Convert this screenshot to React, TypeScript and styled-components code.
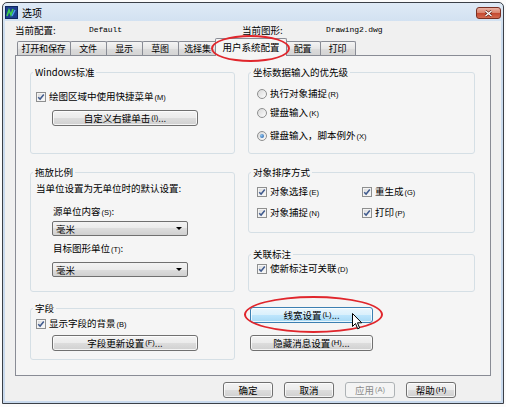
import React from 'react';
import styled, { createGlobalStyle, css } from 'styled-components';

const PANEL_BG = '#f5f5f5';

const GlobalStyle = createGlobalStyle`
  html, body {
    margin: 0;
    padding: 0;
    background: #fbfbfb;
  }
  body {
    font-family: "Noto Sans CJK SC", "Noto Sans", sans-serif;
    font-size: 9.5px;
    line-height: 12px;
    color: #000;
  }
`;

const Window = styled.div`
  position: relative;
  box-sizing: border-box;
  width: 502px;
  height: 402px;
  margin: 2px 0 0 2px;
  padding: 0 2px 2px;
  border: 1px solid #3b4048;
  border-radius: 5px 5px 0 0;
  background: linear-gradient(#dfeaf6, #cadbee 30px, #c9daee);
  box-shadow: 0 1px 0 #2ea3dc;
  display: flex;
  flex-direction: column;
`;

const TitleBar = styled.div`
  height: 18px;
  display: flex;
  align-items: center;
  gap: 4px;
  flex: none;
`;

const Caption = styled.span`
  font-size: 10px;
  margin-top: 1px;
`;

const CloseButton = styled.div`
  box-sizing: border-box;
  margin-left: auto;
  align-self: flex-start;
  margin-top: 4px;
  width: 25px;
  height: 12px;
  border: 1px solid #7a2f22;
  border-radius: 3px;
  background: linear-gradient(#eab3a5, #d9826c 50%, #c4472e 50%, #d46a50);
  display: flex;
  align-items: center;
  justify-content: center;
`;

const Client = styled.div`
  flex: 1;
  background: #f0f0f0;
  padding: 0 10px;
  display: flex;
  flex-direction: column;
`;

const InfoRow = styled.div`
  height: 17px;
  display: grid;
  grid-template-columns: 74px 153px 84px 1fr;
  align-items: center;
`;

const Mono = styled.span`
  font-family: "Liberation Mono", "DejaVu Sans Mono", monospace;
  font-size: 8px;
  letter-spacing: -0.1px;
`;

const TabStrip = styled.div`
  height: 17px;
  display: flex;
  align-items: flex-end;
  padding-left: 2px;
  position: relative;
  z-index: 1;
`;

const Tab = styled.div<{ $w: number; $active?: boolean }>`
  box-sizing: border-box;
  width: ${(p) => p.$w}px;
  height: 14px;
  margin-right: -1px;
  padding-right: 1px;
  border: 1px solid #898c95;
  border-bottom: none;
  border-radius: 2px 2px 0 0;
  background: linear-gradient(#f4f4f4, #e6e6e6 50%, #dcdcdc 50%, #d4d4d4);
  font-size: 9px;
  letter-spacing: -0.2px;
  display: flex;
  align-items: center;
  justify-content: center;
  white-space: nowrap;
  flex: none;
  ${(p) =>
    p.$active &&
    css`
      height: 18px;
      margin: 0 -2px -1px -2px;
      padding-right: 0;
      font-size: 9.5px;
      letter-spacing: 0;
      background: ${PANEL_BG};
      position: relative;
      z-index: 2;
      padding-bottom: 2px;
    `}
`;

const Panel = styled.div`
  box-sizing: border-box;
  height: 321px;
  border: 1px solid #898c95;
  background: ${PANEL_BG};
  padding: 16px 14px 0;
`;

const Columns = styled.div`
  display: grid;
  grid-template-columns: 205px 227px;
  column-gap: 13px;
  align-items: start;
`;

const Col = styled.div`
  display: flex;
  flex-direction: column;
`;

const Group = styled.div<{ $h: number; $top?: number }>`
  box-sizing: border-box;
  height: ${(p) => p.$h}px;
  margin-top: ${(p) => p.$top ?? 0}px;
  padding: 0 5px;
  border: 1px solid #d5dfe5;
  border-radius: 3px;
  display: flex;
  flex-direction: column;
  align-items: flex-start;
`;

const Legend = styled.div`
  margin: -7px 0 0 -3px;
  padding: 0 2px;
  height: 12px;
  background: ${PANEL_BG};
  white-space: nowrap;
`;

const Line = styled.div<{ $top?: number; $left?: number }>`
  height: 12px;
  margin-top: ${(p) => p.$top ?? 0}px;
  margin-left: ${(p) => p.$left ?? 0}px;
  display: flex;
  align-items: center;
  gap: 3px;
  white-space: nowrap;
`;

const Key = styled.span`
  font-family: "Liberation Sans", sans-serif;
  font-size: 7.5px;
  margin-left: 1px;
`;

const Box = styled.span`
  box-sizing: border-box;
  width: 10px;
  height: 10px;
  border: 1px solid #8e8f8f;
  background: linear-gradient(135deg, #d8d8d8, #fdfdfd);
  box-shadow: inset 0 0 0 1px #f4f4f4;
  display: inline-flex;
  align-items: center;
  justify-content: center;
  flex: none;
`;

const Round = styled(Box)`
  border-radius: 50%;
  box-shadow: none;
`;

const Dot = styled.span`
  width: 4px;
  height: 4px;
  border-radius: 50%;
  background: radial-gradient(circle at 35% 35%, #8ec3ee, #1c5aa6);
`;

const SortGrid = styled.div`
  display: grid;
  grid-template-columns: 105px auto;
  row-gap: 9px;
  margin: 8px 0 0 3px;
`;

const Button = styled.button<{ $w: number; $top?: number; $left?: number; $hover?: boolean }>`
  box-sizing: border-box;
  width: ${(p) => p.$w}px;
  height: 16px;
  margin-top: ${(p) => p.$top ?? 0}px;
  margin-left: ${(p) => p.$left ?? 0}px;
  padding: 0;
  border: 1px solid #707070;
  border-radius: 3px;
  background: linear-gradient(#f3f3f3, #ebebeb 50%, #dddddd 50%, #d0d0d0);
  box-shadow: inset 0 0 0 1px rgba(255, 255, 255, 0.75);
  font: inherit;
  color: #000;
  display: flex;
  align-items: center;
  justify-content: center;
  white-space: nowrap;
  flex: none;
  ${(p) =>
    p.$hover &&
    css`
      border-color: #3c7fb1;
      background: linear-gradient(#eaf6fd, #d9f0fc 50%, #bee6fd 50%, #a7d9f5);
    `}
  &:disabled {
    border-color: #adb2b5;
    background: #f4f4f4;
    box-shadow: none;
    color: #8b8b8b;
  }
`;

const Combo = styled.div<{ $top: number }>`
  box-sizing: border-box;
  width: 136px;
  height: 15px;
  margin: ${(p) => p.$top}px 0 0 16px;
  padding: 0 5px 0 3px;
  border: 1px solid #707070;
  border-radius: 2px;
  background: linear-gradient(#f3f3f3, #ebebeb 50%, #dddddd 50%, #d0d0d0);
  display: flex;
  align-items: center;
  justify-content: space-between;
  flex: none;
`;

const Arrow = styled.span`
  width: 0;
  height: 0;
  border-left: 3px solid transparent;
  border-right: 3px solid transparent;
  border-top: 3px solid #000;
`;

const Footer = styled.div`
  display: flex;
  justify-content: flex-end;
  gap: 11px;
  padding: 6px 35px 0 0;
`;

const Ring = styled.span`
  position: absolute;
  box-sizing: border-box;
  border: 2px solid #e0262c;
  border-radius: 50%;
  pointer-events: none;
  z-index: 5;
`;

const Pointer = styled.svg`
  position: absolute;
  left: 349px;
  top: 310px;
  z-index: 6;
`;

const Check: React.FC<{ label: string; mn: string; top?: number; left?: number }> = ({ label, mn, top, left }) => (
  <Line $top={top} $left={left}>
    <Box>
      <svg width="8" height="8" viewBox="0 0 8 8">
        <path d="M1.2 4.2 L3.1 6.1 L6.8 1.6" fill="none" stroke="#3f5a8e" strokeWidth="1.5" />
      </svg>
    </Box>
    <span>
      {label}
      <Key>({mn})</Key>
    </span>
  </Line>
);

const Radio: React.FC<{ label: string; mn: string; top: number; on?: boolean }> = ({ label, mn, top, on }) => (
  <Line $top={top} $left={3}>
    <Round>{on && <Dot />}</Round>
    <span>
      {label}
      <Key>({mn})</Key>
    </span>
  </Line>
);

const tabs = [
  { name: '打开和保存', w: 54 },
  { name: '文件', w: 37 },
  { name: '显示', w: 37 },
  { name: '草图', w: 37 },
  { name: '选择集', w: 40 },
  { name: '用户系统配置', w: 72, active: true },
  { name: '配置', w: 36 },
  { name: '打印', w: 36 },
];

export default function App() {
  return (
    <>
      <GlobalStyle />
      <Window>
        <TitleBar>
          <svg width="13" height="13" viewBox="0 0 13 13">
            <rect x="0.5" y="0.5" width="12" height="12" fill="#1d3f8f" stroke="#0d2660" />
            <path d="M2 10 L4 4 L6 9 L8 3" fill="none" stroke="#3fd04a" strokeWidth="1.6" />
            <path d="M7 10 L10 4" fill="none" stroke="#4aa3f0" strokeWidth="1.4" />
          </svg>
          <Caption>选项</Caption>
          <CloseButton>
            <svg width="9" height="7" viewBox="0 0 9 7">
              <path d="M1.5 1 L7.5 6 M7.5 1 L1.5 6" stroke="#5a1a10" strokeWidth="2.6" />
              <path d="M1.5 1 L7.5 6 M7.5 1 L1.5 6" stroke="#fff" strokeWidth="1.4" />
            </svg>
          </CloseButton>
        </TitleBar>

        <Client>
          <InfoRow>
            <span>当前配置:</span>
            <Mono>Default</Mono>
            <span>当前图形:</span>
            <Mono>Drawing2.dwg</Mono>
          </InfoRow>

          <TabStrip>
            {tabs.map((t) => (
              <Tab key={t.name} $w={t.w} $active={t.active}>
                {t.name}
              </Tab>
            ))}
          </TabStrip>

          <Panel>
            <Columns>
              <Col>
                <Group $h={82}>
                  <Legend>Windows标准</Legend>
                  <Check label="绘图区域中使用快捷菜单" mn="M" top={13} />
                  <Button $w={146} $top={7} $left={16}>
                    自定义右键单击<Key>(I)</Key>...
                  </Button>
                </Group>

                <Group $h={120} $top={18}>
                  <Legend>拖放比例</Legend>
                  <Line $top={4}>当单位设置为无单位时的默认设置:</Line>
                  <Line $top={12} $left={17}>
                    <span>
                      源单位内容<Key>(S)</Key>:
                    </span>
                  </Line>
                  <Combo $top={3}>
                    毫米
                    <Arrow />
                  </Combo>
                  <Line $top={7} $left={17}>
                    <span>
                      目标图形单位<Key>(T)</Key>:
                    </span>
                  </Line>
                  <Combo $top={7}>
                    毫米
                    <Arrow />
                  </Combo>
                </Group>

                <Group $h={52} $top={16}>
                  <Legend>字段</Legend>
                  <Check label="显示字段的背景" mn="B" top={4} />
                  <Button $w={146} $top={5} $left={16}>
                    字段更新设置<Key>(F)</Key>...
                  </Button>
                </Group>
              </Col>

              <Col>
                <Group $h={82}>
                  <Legend>坐标数据输入的优先级</Legend>
                  <Radio label="执行对象捕捉" mn="R" top={10} />
                  <Radio label="键盘输入" mn="K" top={7} />
                  <Radio label="键盘输入，脚本例外" mn="X" top={11} on />
                </Group>

                <Group $h={61} $top={18}>
                  <Legend>对象排序方式</Legend>
                  <SortGrid>
                    <Check label="对象选择" mn="E" />
                    <Check label="重生成" mn="G" />
                    <Check label="对象捕捉" mn="N" />
                    <Check label="打印" mn="P" />
                  </SortGrid>
                </Group>

                <Group $h={38} $top={21}>
                  <Legend>关联标注</Legend>
                  <Check label="使新标注可关联" mn="D" top={3} left={3} />
                </Group>

                <Button $w={123} $top={15} $left={2} $hover>
                  线宽设置<Key>(L)</Key>...
                </Button>
                <Button $w={123} $top={12} $left={2}>
                  隐藏消息设置<Key>(H)</Key>...
                </Button>
              </Col>
            </Columns>
          </Panel>

          <Footer>
            <Button $w={50}>确定</Button>
            <Button $w={50}>取消</Button>
            <Button $w={50} disabled>
              应用<Key>(A)</Key>
            </Button>
            <Button $w={50}>
              帮助<Key>(H)</Key>
            </Button>
          </Footer>
        </Client>

        <Ring style={{ left: 208, top: 32, width: 79, height: 27 }} />
        <Ring style={{ left: 241, top: 293, width: 139, height: 37 }} />

        <Pointer width="11" height="17" viewBox="0 0 11 17">
          <path d="M0.5 0.5 L0.5 13.5 L3.5 10.5 L5.7 15.8 L7.6 15 L5.5 9.8 L9.7 9.8 Z" fill="#fff" stroke="#000" strokeWidth="1" strokeLinejoin="round" />
        </Pointer>
      </Window>
    </>
  );
}
